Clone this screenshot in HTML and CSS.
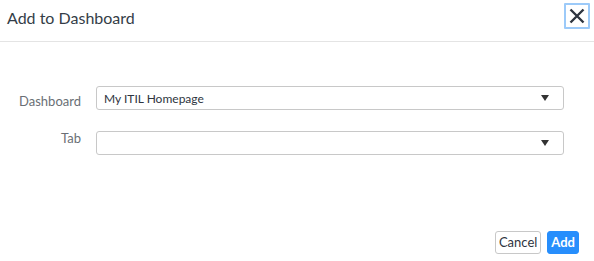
FILE: index.html
```html
<!DOCTYPE html>
<html>
<head>
<meta charset="utf-8">
<link rel="stylesheet" href="styles.css">
</head>
<body>
<div class="modal">
  <div class="modal-header">
    <h1 class="modal-title">Add to Dashboard</h1>
    <button class="close-btn" aria-label="Close">
      <svg width="18" height="18" viewBox="0 0 18 18"><path d="M2.5 2.5 L15.5 15.5 M15.5 2.5 L2.5 15.5" stroke="#2e3540" stroke-width="2.4" stroke-linecap="butt" fill="none"/></svg>
    </button>
  </div>
  <div class="modal-body">
    <div class="form-row">
      <label class="form-label form-label-low">Dashboard</label>
      <div class="select"><span class="select-value">My ITIL Homepage</span><span class="caret"></span></div>
    </div>
    <div class="form-row">
      <label class="form-label form-label-high">Tab</label>
      <div class="select"><span class="select-value"></span><span class="caret"></span></div>
    </div>
  </div>
  <div class="modal-footer">
    <button class="btn btn-default">Cancel</button>
    <button class="btn btn-primary">Add</button>
  </div>
</div>
</body>
</html>
```
FILE: styles.css
```css
html, body {
  margin: 0;
  padding: 0;
  background: #ffffff;
}
body {
  font-family: Lato, "Liberation Sans", sans-serif;
  color: #2e3540;
}
.modal {
  width: 594px;
  height: 261px;
  display: flex;
  flex-direction: column;
}
.modal-header {
  border-bottom: 1px solid #e4e4e4;
  display: flex;
  align-items: flex-start;
  justify-content: space-between;
  box-sizing: border-box;
  height: 42px;
}
.modal-title {
  margin: 0;
  padding: 8px 0 0 7px;
  font-size: 16px;
  font-weight: normal;
  color: #343d47;
  line-height: 20px;
}
.close-btn {
  margin: 3px 4px 0 0;
  width: 26px;
  height: 26px;
  padding: 0;
  border: 2px solid #9ccaf9;
  border-radius: 1px;
  background: #fff;
  display: flex;
  align-items: center;
  justify-content: center;
}
.modal-body {
  padding: 44px 30px 0 0;
  display: flex;
  flex-direction: column;
  gap: 21px;
  flex: 1;
}
.form-row {
  display: flex;
  align-items: flex-start;
  gap: 15px;
}
.form-label {
  width: 81px;
  text-align: right;
  font-size: 13px;
  line-height: 16px;
  color: #6a6f75;
}
.form-label-low {
  margin-top: 7px;
}
.form-label-high {
  margin-top: -1px;
}
.select {
  flex: 1;
  height: 24px;
  box-sizing: border-box;
  border: 1px solid #c8c8c8;
  border-radius: 3px;
  display: flex;
  align-items: center;
  justify-content: space-between;
  padding: 0 14px 0 7px;
}
.select-value {
  font-size: 12px;
  color: #2e3540;
}
.caret {
  width: 0;
  height: 0;
  border-left: 4px solid transparent;
  border-right: 4px solid transparent;
  border-top: 6px solid #333;
}
.modal-footer {
  display: flex;
  justify-content: flex-end;
  gap: 6px;
  padding: 0 15px 7px 0;
}
.btn {
  height: 23px;
  box-sizing: border-box;
  border-radius: 3px;
  font-family: Lato, "Liberation Sans", sans-serif;
  font-size: 13px;
  line-height: 21px;
}
.btn-default {
  padding: 0 3px;
  background: #fff;
  border: 1px solid #c8c8c8;
  color: #2e3540;
}
.btn-primary {
  padding: 0 3px;
  background: #278efc;
  border: 1px solid #278efc;
  color: #fff;
  font-weight: bold;
}
```
